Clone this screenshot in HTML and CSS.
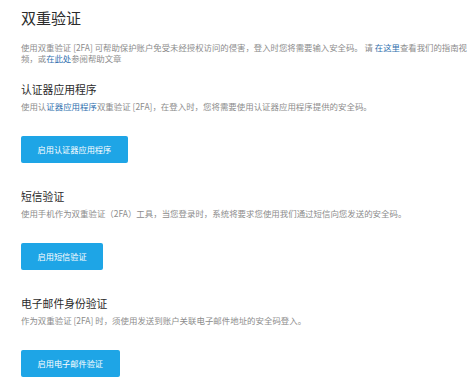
FILE: index.html
```html
<!DOCTYPE html>
<html lang="zh-CN">
<head>
<meta charset="utf-8">
<link rel="stylesheet" href="styles.css">
</head>
<body>
<div class="page">
  <h1 class="title">双重验证</h1>
  <p class="intro">使用双重验证 [2FA] 可帮助保护账户免受未经授权访问的侵害，登入时您将需要输入安全码。 请 <a class="link" href="#">在这里</a>查看我们的指南视频，或<a class="link" href="#">在此处</a>参阅帮助文章</p>

  <section class="method">
    <h2 class="method-title">认证器应用程序</h2>
    <p class="desc">使用认<a class="link" href="#">证器应用程序</a>双重验证 [2FA]，在登入时，您将需要使用认证器应用程序提供的安全码。</p>
    <button class="btn">启用认证器应用程序</button>
  </section>

  <section class="method">
    <h2 class="method-title">短信验证</h2>
    <p class="desc">使用手机作为双重验证（2FA）工具，当您登录时，系统将要求您使用我们通过短信向您发送的安全码。</p>
    <button class="btn">启用短信验证</button>
  </section>

  <section class="method">
    <h2 class="method-title">电子邮件身份验证</h2>
    <p class="desc">作为双重验证 [2FA] 时，须使用发送到账户关联电子邮件地址的安全码登入。</p>
    <button class="btn">启用电子邮件验证</button>
  </section>
</div>
</body>
</html>
```

FILE: styles.css
```css
html, body {
  margin: 0;
  padding: 0;
  background: #ffffff;
}

body {
  font-family: "Noto Sans CJK SC", "Noto Sans", "Liberation Sans", sans-serif;
  color: #333333;
}

.page {
  display: flex;
  flex-direction: column;
  align-items: flex-start;
  padding: 8px 3px 0 21px;
}

.title {
  margin: 0;
  font-size: 15px;
  line-height: 20px;
  font-weight: 400;
  color: #2b2b2b;
}

.intro {
  margin: 14px 0 0;
  font-size: 8.4px;
  line-height: 11px;
  color: #8c8c8c;
}

.link {
  color: #2f6fae;
  text-decoration: none;
}

.method {
  display: flex;
  flex-direction: column;
  align-items: flex-start;
  margin-top: 18px;
}

.method + .method {
  margin-top: 26px;
}

.method-title {
  margin: 0;
  font-size: 10.8px;
  line-height: 14px;
  font-weight: 400;
  color: #2b2b2b;
}

.desc {
  margin: 5px 0 0;
  font-size: 8.45px;
  line-height: 11px;
  color: #8c8c8c;
}

.btn {
  margin-top: 24px;
  height: 27px;
  padding: 0 16.5px;
  border: none;
  border-radius: 2px;
  background: #1ea5e6;
  color: #ffffff;
  font-family: inherit;
  font-size: 8.2px;
  line-height: 27px;
  cursor: pointer;
}
```
